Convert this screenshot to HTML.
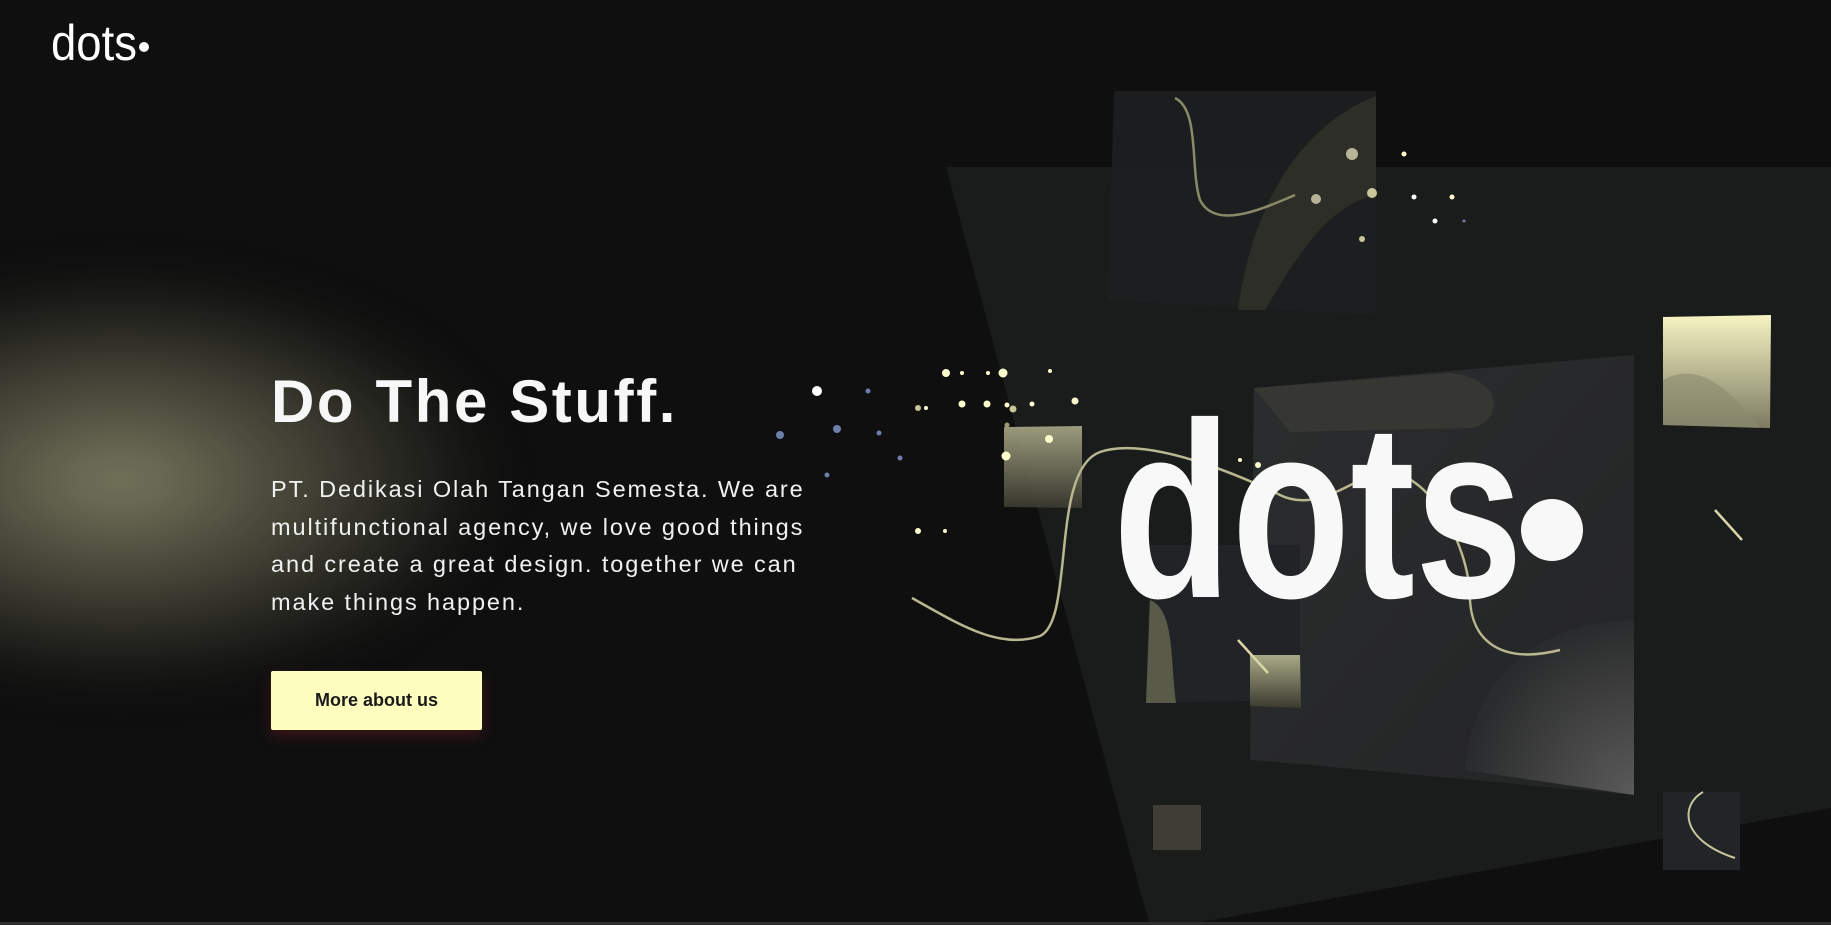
<!DOCTYPE html>
<html><head><meta charset="utf-8"><style>
html,body{margin:0;padding:0;width:1831px;height:925px;overflow:hidden;background:#0f0f0f;font-family:"Liberation Sans",sans-serif}
.glow{position:absolute;left:-260px;top:270px;width:760px;height:420px;border-radius:50%;background:radial-gradient(ellipse at center,rgba(125,124,98,.95) 0%,rgba(100,100,80,.6) 35%,rgba(40,40,34,.25) 65%,rgba(15,15,15,0) 80%);filter:blur(18px)}
h1{position:absolute;left:271px;top:367px;margin:0;font-size:60px;font-weight:bold;color:#f7f7f7;letter-spacing:2.6px;white-space:nowrap}
p{position:absolute;left:271px;top:471px;width:620px;margin:0;font-size:23.5px;line-height:37.5px;color:#f1f1f1;letter-spacing:1.9px;white-space:nowrap}
.btn{position:absolute;left:271px;top:671px;width:211px;height:59px;background:#fefebf;border-radius:2px;box-shadow:0 6px 14px rgba(120,30,40,.45);color:#1a1a1a;font-weight:bold;font-size:18px;line-height:59px;text-align:center}
svg{position:absolute;left:0;top:0}
</style></head><body>
<div class="glow"></div>
<svg width="1831" height="925" viewBox="0 0 1831 925">
<defs>
<linearGradient id="ys" x1="0" y1="0" x2="0" y2="1"><stop offset="0" stop-color="#f6f4c2"/><stop offset="1" stop-color="#7c7b62"/></linearGradient>
<linearGradient id="gs" x1="0" y1="0" x2="0" y2="1"><stop offset="0" stop-color="#a9a987"/><stop offset="1" stop-color="#3a3a30"/></linearGradient>
<linearGradient id="cp" x1="0" y1="0" x2="1" y2="1"><stop offset="0" stop-color="#2c2d2e"/><stop offset="1" stop-color="#232425"/></linearGradient>
<radialGradient id="bl" cx="1" cy="1" r="1"><stop offset="0" stop-color="#5a5a5a"/><stop offset="1" stop-color="#2a2b2c"/></radialGradient>
</defs>
<polygon points="946,167 1831,167 1831,808 1185,925 1150,925 1140,890" fill="#1a1c1c"/>
<polygon points="1114,91 1376,91 1376,315 1108,300" fill="#1e1f21" opacity=".9"/>
<path d="M1238,310 C1250,220 1290,130 1376,96 L1376,195 C1330,205 1300,250 1265,310 Z" fill="#2e2e28"/>
<path d="M1175,98 C1200,110 1190,170 1200,200 C1215,230 1260,210 1295,195" stroke="#8a8a68" stroke-width="2.5" fill="none"/>
<polygon points="1254,388 1634,355 1634,795 1310,765 1250,760" fill="url(#cp)"/>
<path d="M1254,388 L1450,373 C1510,380 1500,425 1470,428 L1290,432 Z" fill="#3a3a34" opacity=".8"/>
<path d="M1465,770 C1470,680 1540,620 1634,620 L1634,795 Z" fill="url(#bl)"/>
<polygon points="1150,545 1300,545 1300,700 1146,703" fill="#222326"/>
<path d="M1150,600 C1175,610 1170,660 1176,703 L1146,703 Z" fill="#5a5a48"/>
<polygon points="1250,655 1300,655 1301,708 1250,706" fill="url(#gs)"/>
<polygon points="1663,317 1771,315 1770,428 1663,425" fill="url(#ys)"/>
<path d="M1663,380 C1700,360 1730,390 1760,428 L1663,425 Z" fill="#8c8b6e" opacity=".6"/>
<polygon points="1004,427 1082,426 1082,508 1004,507" fill="url(#gs)" opacity=".9"/>
<polygon points="1153,805 1201,805 1201,850 1153,850" fill="#3e3e36"/>
<polygon points="1663,792 1740,792 1740,870 1663,870" fill="#232427"/>
<path d="M1703,792 C1680,805 1680,840 1735,858" stroke="#c8c69a" stroke-width="2" fill="none"/>
<path d="M1715,510 L1742,540" stroke="#d8d6a8" stroke-width="2.5"/>
<path d="M1238,640 L1268,673" stroke="#d8d6a8" stroke-width="2.5"/>
<path d="M912,598 C960,625 1000,650 1040,636 C1075,620 1050,470 1100,452 C1150,435 1250,480 1280,495 C1310,510 1340,490 1370,475 C1420,455 1470,540 1470,600 C1472,640 1500,665 1560,650" stroke="#b9b78f" stroke-width="2.5" fill="none"/>
<g fill="#fefccc">
<circle cx="817" cy="391" r="5" fill="#fff"/><circle cx="868" cy="391" r="2.5" fill="#6d7fa8"/><circle cx="837" cy="429" r="4" fill="#6d7fa8"/><circle cx="780" cy="435" r="4" fill="#6d7fa8"/><circle cx="879" cy="433" r="2.5" fill="#6d7fa8"/><circle cx="827" cy="475" r="2.5" fill="#6d7fa8"/><circle cx="900" cy="458" r="2.5" fill="#6d7fa8"/>
<circle cx="946" cy="373" r="4"/><circle cx="1003" cy="373" r="4.5"/><circle cx="962" cy="373" r="2"/><circle cx="988" cy="373" r="2"/><circle cx="1050" cy="371" r="2"/><circle cx="918" cy="408" r="3" fill="#c8c69a"/><circle cx="926" cy="408" r="2"/><circle cx="962" cy="404" r="3.5"/><circle cx="987" cy="404" r="3.5"/><circle cx="1013" cy="409" r="3.5" fill="#c8c69a"/><circle cx="1075" cy="401" r="3.5"/><circle cx="1007" cy="405" r="2.5"/><circle cx="1032" cy="404" r="2.5"/><circle cx="1007" cy="425" r="2.5" fill="#9a9a7a"/><circle cx="1006" cy="456" r="4.5"/><circle cx="918" cy="531" r="3"/><circle cx="945" cy="531" r="2"/><circle cx="1049" cy="439" r="4"/><circle cx="1258" cy="465" r="3"/><circle cx="1240" cy="460" r="2"/>
<circle cx="1352" cy="154" r="6" fill="#b5b496"/><circle cx="1404" cy="154" r="2.5"/><circle cx="1316" cy="199" r="5" fill="#b5b496"/><circle cx="1372" cy="193" r="5" fill="#c8c69a"/><circle cx="1414" cy="197" r="2.5" fill="#fff"/><circle cx="1452" cy="197" r="2.5"/><circle cx="1435" cy="221" r="2.5" fill="#fff"/><circle cx="1464" cy="221" r="1.5" fill="#6d7fa8"/><circle cx="1362" cy="239" r="3" fill="#c8c69a"/>
</g>
<text x="1113" y="597" font-family="Liberation Sans" font-weight="bold" font-size="250" fill="#f8f8f8" textLength="410" lengthAdjust="spacingAndGlyphs">dots</text>
<circle cx="1552" cy="530" r="31" fill="#f8f8f8"/>
<text x="51" y="60" font-family="Liberation Sans" font-size="50" fill="#fff" textLength="86" lengthAdjust="spacingAndGlyphs">dots</text>
<circle cx="144" cy="47" r="5" fill="#fff"/>
<rect x="0" y="922" width="1831" height="3" fill="#2e2e2e"/>
</svg>
<h1>Do The Stuff.</h1>
<p>PT. Dedikasi Olah Tangan Semesta. We are<br>multifunctional agency, we love good things<br>and create a great design. together we can<br>make things happen.</p>
<div class="btn">More about us</div>
</body></html>
